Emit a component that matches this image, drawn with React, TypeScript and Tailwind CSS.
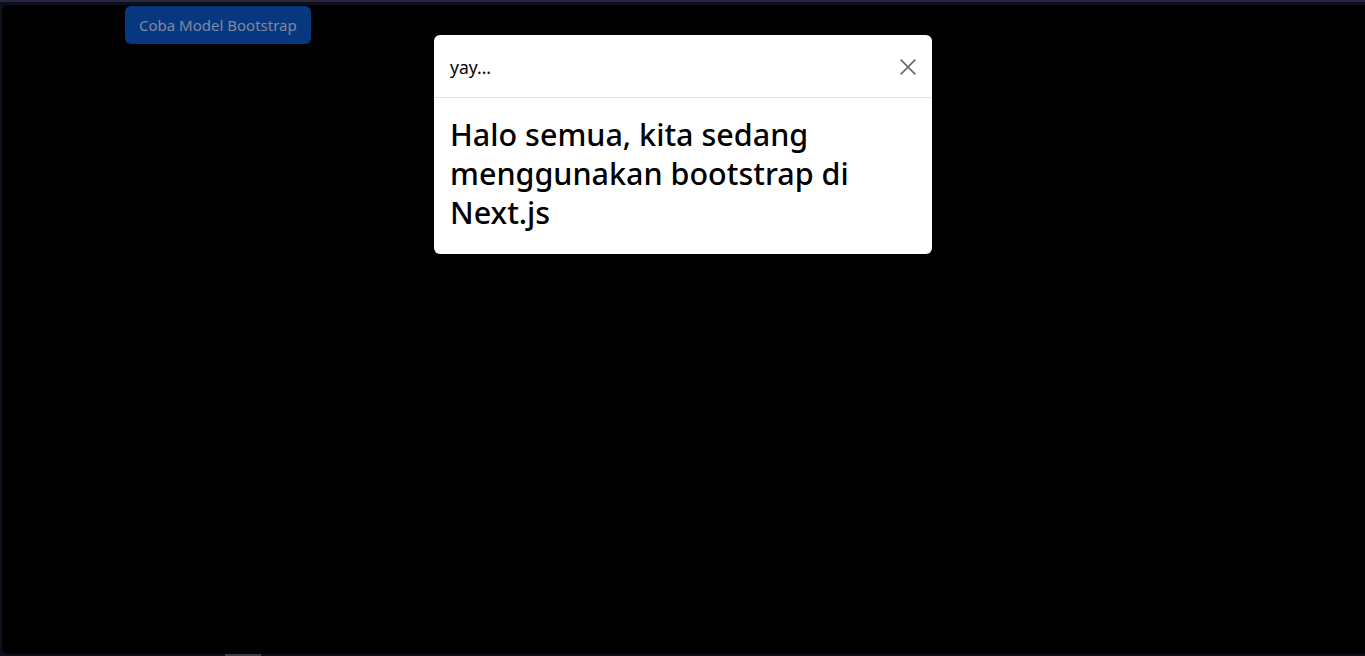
export default function App() {
  return (
    <div
      className="h-[656px] w-full overflow-hidden bg-[#0c0e1c] flex flex-col"
      style={{ fontFamily: '"Noto Sans", "Open Sans", sans-serif' }}
    >
      {/* window frame top */}
      <div className="h-[2px] bg-[#272a3e] shrink-0" />
      <div className="flex-1 pt-[3px] pl-[2px] pb-[2px] flex">
        <div className="relative flex-1 bg-black rounded-tl-[6px] rounded-bl-[6px]">
          {/* backdrop'd page */}
          <div className="pl-[123px] pt-[1px]">
            <button className="h-[38px] px-[14px] rounded-[6px] bg-[#07377f] text-[#7f8aa0] text-[15px]">
              Coba Model Bootstrap
            </button>
          </div>

          {/* modal */}
          <div className="absolute left-[432px] top-[30px] w-[498px] bg-white rounded-[6px] overflow-hidden">
            <div className="h-[63px] pl-[16px] pr-[14px] flex items-center justify-between border-b border-[#dee2e6]">
              <span className="text-[17.5px] text-black pt-[2px]">yay...</span>
              <button className="w-[20px] h-[20px] flex items-center justify-center mt-[2px]">
                <svg width="18" height="18" viewBox="0 0 16 16" fill="none">
                  <path d="M1.5 1.5 L14.5 14.5 M14.5 1.5 L1.5 14.5" stroke="#6e6e6e" strokeWidth="1.6" />
                </svg>
              </button>
            </div>
            <div className="px-[16px] pt-[17px] pb-[22px]">
              <h1 className="text-[30.5px] leading-[39px] text-black font-medium">
                Halo semua, kita sedang menggunakan bootstrap di Next.js
              </h1>
            </div>
          </div>
          <div className="absolute bottom-[-2px] left-[223px] w-[36px] h-[2px] bg-[#3a3d4a]" />
        </div>
      </div>
    </div>
  );
}
